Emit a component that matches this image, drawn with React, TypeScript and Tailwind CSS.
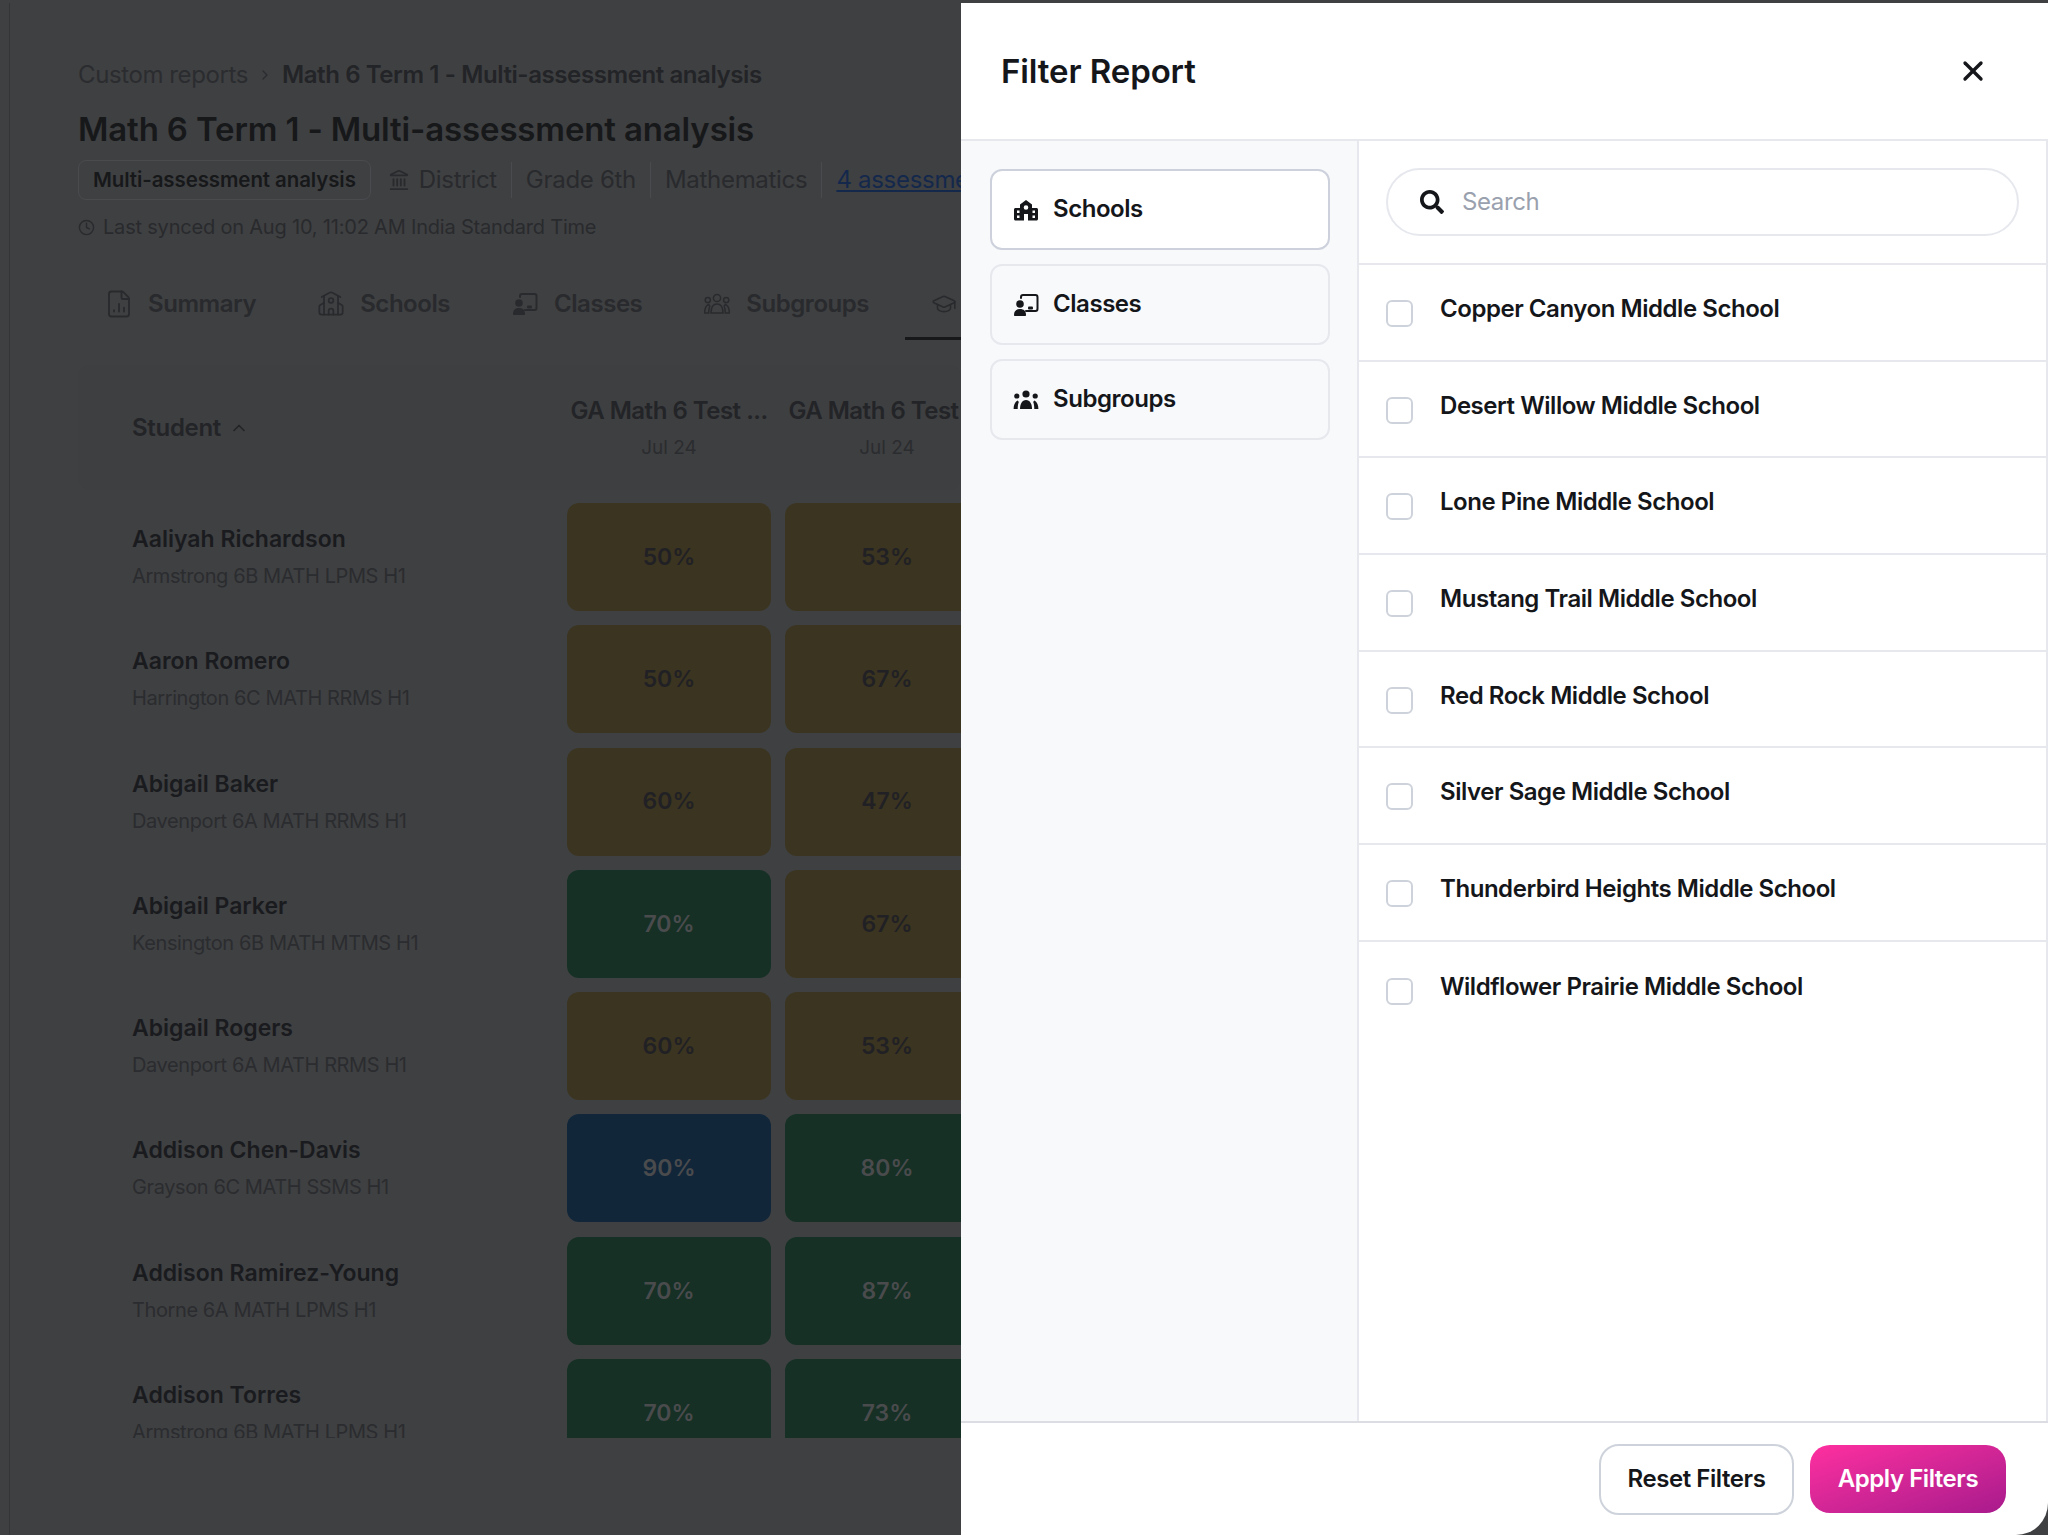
import {
  ChevronRight,
  ChevronUp,
  Clock,
  FileChartColumn,
  GraduationCap,
  Landmark,
  School,
  X,
} from "lucide-react";
import { FaSearch } from "react-icons/fa";

const font = { fontFamily: "Inter, 'Noto Sans', sans-serif" };

const students = [
  { name: "Aaliyah Richardson", group: "Armstrong 6B MATH LPMS H1", a: 50, b: 53 },
  { name: "Aaron Romero", group: "Harrington 6C MATH RRMS H1", a: 50, b: 67 },
  { name: "Abigail Baker", group: "Davenport 6A MATH RRMS H1", a: 60, b: 47 },
  { name: "Abigail Parker", group: "Kensington 6B MATH MTMS H1", a: 70, b: 67 },
  { name: "Abigail Rogers", group: "Davenport 6A MATH RRMS H1", a: 60, b: 53 },
  { name: "Addison Chen-Davis", group: "Grayson 6C MATH SSMS H1", a: 90, b: 80 },
  { name: "Addison Ramirez-Young", group: "Thorne 6A MATH LPMS H1", a: 70, b: 87 },
  { name: "Addison Torres", group: "Armstrong 6B MATH LPMS H1", a: 70, b: 73 },
];

const schools = [
  "Copper Canyon Middle School",
  "Desert Willow Middle School",
  "Lone Pine Middle School",
  "Mustang Trail Middle School",
  "Red Rock Middle School",
  "Silver Sage Middle School",
  "Thunderbird Heights Middle School",
  "Wildflower Prairie Middle School",
];

function SchoolIcon({ className }: { className?: string }) {
  return (
    <svg viewBox="0 0 26 24" className={className} fill="currentColor" fillRule="evenodd">
      <path d="M13 2l6 4.500V10h4.500c.8 0 1.500.7 1.500 1.500V21c0 .8-.7 1.500-1.500 1.500h-21C1.700 22.500 1 21.800 1 21v-9.500C1 10.700 1.700 10 2.500 10H7V6.500zM13 7.200a2.300 2.300 0 1 0 0 4.600 2.300 2.300 0 0 0 0-4.600zM11 16v6.500h4V16zM4 12.500v2.500h2.500v-2.500zM4 17.500V20h2.500v-2.500zM19.500 12.500v2.500H22v-2.500zM19.500 17.500V20H22v-2.500z" />
    </svg>
  );
}

// board with a person in front of it
function ClassIcon({ className }: { className?: string }) {
  return (
    <svg viewBox="0 0 26 24" className={className} fill="currentColor">
      <path d="M8 5V4.200C8 3 8.900 2 10 2h12.500c1.200 0 2 1 2 2.200v11.600c0 1.200-.8 2.200-2 2.200H13" fill="none" stroke="currentColor" strokeWidth="2" strokeLinecap="round" />
      <rect x="15" y="13.500" width="5" height="3" rx="1" />
      <circle cx="7" cy="11" r="3.800" />
      <path d="M1 22c0-4 2.200-6 6-6s6 2 6 6c0 .6-.4 1-1 1H2c-.6 0-1-.4-1-1z" />
    </svg>
  );
}

function GroupIcon({ className, outline }: { className?: string; outline?: boolean }) {
  const paint = outline
    ? { fill: "none", stroke: "currentColor", strokeWidth: 1.5 }
    : { fill: "currentColor" };
  return (
    <svg viewBox="0 0 26 20" className={className} {...paint}>
      <circle cx="13" cy="4" r="3.600" />
      <circle cx="3.800" cy="6" r="2.600" />
      <circle cx="22.200" cy="6" r="2.600" />
      <path d="M7 19c0-5 2-9 6-9s6 4 6 9z" />
      <path d="M.6 19c0-4 1.200-7 3.800-8.600C5.200 11 5.600 11.500 5.800 12 5 14 4.700 16.500 4.700 19z" />
      <path d="M25.400 19c0-4-1.200-7-3.800-8.600-.8.6-1.200 1.100-1.400 1.600.8 2 1.100 4.500 1.100 7z" />
    </svg>
  );
}

function ScoreCell({ value }: { value: number }) {
  // score bands, as seen through the dimmed backdrop
  let tone = "bg-[#3b3420] text-[#212125]";
  if (value >= 90) tone = "bg-[#12263a] text-[#4a4b4d]";
  else if (value >= 70) tone = "bg-[#163025] text-[#4a4b4d]";
  return (
    <div className={`flex h-[108px] items-center justify-center rounded-xl text-[23px] font-semibold ${tone}`}>
      {value}%
    </div>
  );
}

function Tab({ icon, label, active }: { icon: React.ReactNode; label: string; active?: boolean }) {
  return (
    <div
      className={`flex h-[74px] shrink-0 items-center gap-4 border-b-[3px] px-[26px] pt-1 ${
        active ? "border-[#17181a]" : "border-transparent"
      }`}
    >
      {icon}
      {label}
    </div>
  );
}

function Backdrop() {
  return (
    <div className="ml-[9px] h-full min-w-0 flex-1 overflow-hidden border-l border-[#343537] pl-[68px] text-[#232427]">
      <div className="flex items-center gap-[9px] pt-[56px] text-[24px] leading-[32px] tracking-[-0.4px]">
        <span className="text-[#2b2c2f]">Custom reports</span>
        <ChevronRight className="size-4 shrink-0 text-[#2b2c2f]" />
        <span className="whitespace-nowrap font-semibold">Math 6 Term 1 - Multi-assessment analysis</span>
      </div>
      <div className="mt-[18px] whitespace-nowrap text-[33px] font-semibold leading-[40px] tracking-[-0.15px] text-[#17181a]">
        Math 6 Term 1 - Multi-assessment analysis
      </div>
      <div className="mt-[11px] flex items-center whitespace-nowrap text-[24px] tracking-[-0.3px] text-[#292a2d]">
        <span className="flex h-10 shrink-0 items-center rounded-lg border border-[#4a4b4e] px-[14px] text-[20.500px] font-semibold tracking-[-0.1px] text-[#17181a]">
          Multi-assessment analysis
        </span>
        <Landmark className="ml-[17px] mr-[9px] size-[22px] shrink-0" />
        <span className="border-r border-[#4a4b4e] pr-[14px]">District</span>
        <span className="border-r border-[#4a4b4e] px-[14px]">Grade 6th</span>
        <span className="border-r border-[#4a4b4e] px-[14px]">Mathematics</span>
        <span className="pl-[14px] text-[#14284c] underline">4 assessments</span>
      </div>
      <div className="mt-[13px] flex h-7 items-center gap-2 text-[20px] tracking-[-0.2px] text-[#292a2d]">
        <Clock className="size-[17px] shrink-0" />
        Last synced on Aug 10, 11:02 AM India Standard Time
      </div>
      <div className="ml-[2px] mt-[25px] flex items-center gap-[10px] text-[24px] font-semibold tracking-[-0.45px] text-[#292a2d]">
        <Tab icon={<FileChartColumn className="-mx-[2px] size-[30px]" strokeWidth={1.5} />} label="Summary" />
        <Tab icon={<School className="-mx-px size-7" strokeWidth={1.5} />} label="Schools" />
        <Tab icon={<ClassIcon className="size-[26px]" />} label="Classes" />
        <Tab icon={<GroupIcon className="size-[26px]" outline />} label="Subgroups" />
        <Tab icon={<GraduationCap className="size-[26px]" strokeWidth={1.5} />} label="Students" active />
      </div>
      <div className="mb-[13px] mt-[25px] flex h-[125px] items-center rounded-xl bg-[#3e3f41]">
        <div className="flex w-[489px] shrink-0 items-center gap-2 pl-[54px] text-[24px] font-semibold tracking-[-0.3px]">
          Student <ChevronUp className="size-5" />
        </div>
        <div className="grid w-[422px] shrink-0 grid-cols-2 gap-[14px] pt-[2px] text-center">
          {[0, 1].map((i) => (
            <div key={i} className="whitespace-nowrap text-[24px] font-semibold leading-[37px] tracking-[-0.5px]">
              <div>GA Math 6 Test ...</div>
              <div className="text-[19px] font-normal tracking-normal text-[#2b2c2f]">Jul 24</div>
            </div>
          ))}
        </div>
      </div>
      <div className="h-[935px] overflow-hidden">
        {students.map((s) => (
          <div key={s.name} className="mb-[14.300px] flex h-[108px] items-center">
            <div className="w-[489px] shrink-0 pl-[54px] pt-[2px]">
              <div className="text-[23px] font-semibold leading-[36px] text-[#1a1b1e]">{s.name}</div>
              <div className="text-[20px] leading-[38px] tracking-[-0.4px] text-[#2b2c2f]">{s.group}</div>
            </div>
            <div className="grid w-[422px] shrink-0 grid-cols-2 gap-[14px]">
              <ScoreCell value={s.a} />
              <ScoreCell value={s.b} />
            </div>
          </div>
        ))}
      </div>
    </div>
  );
}

function SideItem({ icon, label, active }: { icon: React.ReactNode; label: string; active?: boolean }) {
  return (
    <div
      className={`flex h-[81px] items-center gap-[14px] rounded-xl border-2 px-[21px] text-[24px] font-semibold tracking-[-0.45px] ${
        active ? "border-[#cdd1dc] bg-white" : "border-[#e6e8ee] bg-[#f8f9fb]"
      }`}
    >
      {icon}
      <span className="-mt-0.5">{label}</span>
    </div>
  );
}

export default function App() {
  return (
    <div className="flex h-[1535px] w-[2048px] overflow-hidden bg-[#3f4042] pt-[3px]" style={font}>
      <Backdrop />
      <div className="flex h-full w-[1087px] shrink-0 flex-col rounded-br-[32px] bg-white text-[#14161a]">
        <div className="flex h-[138px] shrink-0 items-center justify-between border-b-2 border-[#e6e8ee] pl-10 pr-[59px]">
          <div className="pt-[2px] text-[33px] font-semibold tracking-[-0.1px]">Filter Report</div>
          <X className="size-8" strokeWidth={2.5} />
        </div>
        <div className="flex min-h-0 flex-1 border-r-2 border-[#e6e8ee]">
          <div className="flex w-[398px] shrink-0 flex-col gap-[14px] border-r-2 border-[#e6e8ee] bg-[#f8f9fb] pl-[29px] pr-[27px] pt-7">
            <SideItem icon={<SchoolIcon className="size-[26px]" />} label="Schools" active />
            <SideItem icon={<ClassIcon className="size-[26px]" />} label="Classes" />
            <SideItem icon={<GroupIcon className="size-[26px]" />} label="Subgroups" />
          </div>
          <div className="min-w-0 flex-1">
            <div className="flex h-[124px] items-center border-b-2 border-[#e6e8ee] pl-[27px] pr-[27px]">
              <div className="flex h-[68px] w-full items-center gap-[18px] rounded-full border-2 border-[#e6e8ee] pl-[32px] text-[24px] tracking-[-0.4px] text-[#9aa1ae]">
                <FaSearch className="size-6 text-[#14161a]" />
                Search
              </div>
            </div>
            {schools.map((name, i) => (
              <div
                key={name}
                className={`flex h-[96.700px] items-center gap-[27px] pl-[27px] text-[24px] font-semibold tracking-[-0.45px] ${
                  i < 7 ? "border-b-2 border-[#e6e8ee]" : ""
                }`}
              >
                <span className="mt-[2px] size-[27px] rounded-md border-2 border-[#ced3db] bg-white" />
                <span className="-mt-[7px]">{name}</span>
              </div>
            ))}
          </div>
        </div>
        <div className="flex h-[114px] shrink-0 items-center justify-end gap-4 border-t-2 border-[#dcdde3] pr-[42px]">
          <button className="h-[71px] w-[195px] rounded-[20px] border-2 border-[#ced3db] text-[24px] font-semibold tracking-[-0.45px]">
            Reset Filters
          </button>
          <button className="h-[68px] w-[196px] rounded-[20px] bg-linear-to-br from-[#ff2f9f] to-[#a81a8c] text-[24px] font-semibold tracking-[-0.45px] text-white">
            Apply Filters
          </button>
        </div>
      </div>
    </div>
  );
}
